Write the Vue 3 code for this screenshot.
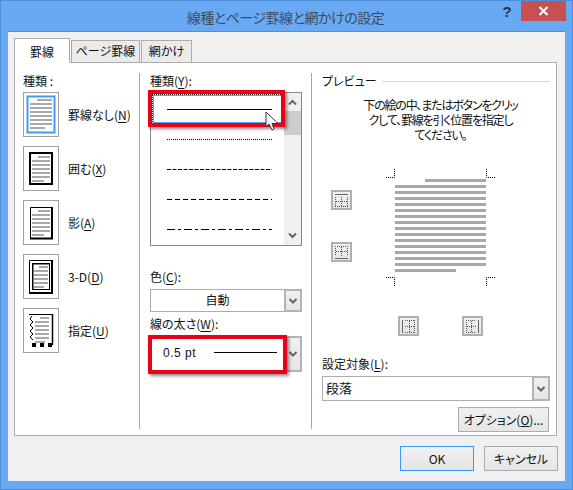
<script setup>
const makeLines = (x, w, indent, lastW, y, n) =>
  Array.from({ length: n }, (_, i) => ({
    x: i === 0 ? x + indent : x,
    y: y + i * 4,
    w: i === 0 ? w - indent : i === n - 1 ? lastW : w
  }))

const borders = [
  { kind: 'none', label: '罫線なし', key: 'N', lines: makeLines(6, 22, 7, 15, 6, 8) },
  { kind: 'box', label: '囲む', key: 'X', lines: makeLines(8, 18, 6, 12, 9, 7) },
  { kind: 'shadow', label: '影', key: 'A', lines: makeLines(8, 18, 6, 12, 9, 7) },
  { kind: 'three', label: '3-D', key: 'D', lines: makeLines(10, 14, 5, 10, 11, 6) },
  { kind: 'custom', label: '指定', key: 'U', lines: makeLines(11, 14, 5, 10, 8, 7) }
]
const previewLines = Array.from({ length: 16 }, (_, i) => i)
const dashes = ['1 1', '4 1.500', '5 3', '8 3 3 3']
</script>

<template>
  <div class="window">
    <header class="titlebar">
      <div class="title">線種とページ罫線と網かけの設定</div>
      <div class="help">?</div>
      <div class="close">
        <svg width="11" height="10" viewBox="0 0 11 10"><path d="M1.500 1l8 8M9.500 1l-8 8" stroke="#fff" stroke-width="2" fill="none" /></svg>
      </div>
    </header>
    <main class="client">
      <nav class="tabs">
        <div class="tab active">罫線</div>
        <div class="tab second">ページ罫線</div>
        <div class="tab third">網かけ</div>
      </nav>
      <section class="panel">
        <div class="col left">
          <div class="label kind-label">種類 :</div>
          <div v-for="b in borders" :key="b.kind" class="option">
            <div class="thumb">
              <svg width="34" height="43" viewBox="0 0 34 43">
                <rect v-for="(l, i) in b.lines" :key="i" :x="l.x" :y="l.y" :width="l.w" height="2" fill="#a8a8a8" />
                <rect v-if="b.kind === 'none'" x="3.500" y="3.500" width="27" height="36" fill="none" stroke="#3f9cf5" stroke-width="2" />
                <rect v-if="b.kind === 'box'" x="6" y="6" width="22" height="31" fill="none" stroke="#000" stroke-width="2" />
                <g v-if="b.kind === 'shadow'">
                  <path d="M6.500 37V6.500H27" fill="none" stroke="#000" />
                  <path d="M6 37.500h22V6" fill="none" stroke="#000" stroke-width="2" />
                </g>
                <g v-if="b.kind === 'three'">
                  <path d="M5.500 37V5.500H28" fill="none" stroke="#000" />
                  <path d="M5 38h23V5" fill="none" stroke="#000" stroke-width="2" />
                  <rect x="8.500" y="8.500" width="17" height="26" fill="none" stroke="#000" />
                  <path d="M8 9h17M9 9v25" stroke="#000" fill="none" />
                </g>
                <g v-if="b.kind === 'custom'">
                  <path d="M5 5.500h23" stroke="#000" fill="none" />
                  <path d="M28.500 5v31" stroke="#000" stroke-width="1.500" fill="none" />
                  <path d="M8 7L6 10l3 3-3 3 3 3-3 3 3 3-3 3 3 3" stroke="#000" fill="none" />
                  <path d="M8 34h4v4H8zM16 34h4v4h-4zM24 34h4v4h-4z" fill="#000" />
                </g>
              </svg>
            </div>
            <div class="label option-label">{{ b.label }}(<u>{{ b.key }}</u>)</div>
          </div>
        </div>

        <div class="col middle">
          <div class="label">種類(<u>Y</u>):</div>
          <div class="listbox">
            <div class="rows">
              <div class="row selected">
                <svg width="105" height="1" class="line"><path d="M0 .5h105" stroke="#000" /></svg>
              </div>
              <div v-for="d in dashes" :key="d" class="row">
                <svg width="105" height="1" class="line"><path d="M0 .5h105" stroke="#000" :stroke-dasharray="d" /></svg>
              </div>
            </div>
            <div class="scrollbar">
              <svg width="17" height="18" viewBox="0 0 17 18"><path d="M5 11.500l3.500-3.500 3.500 3.500" fill="none" stroke="#666" stroke-width="2" /></svg>
              <div class="scroll-thumb"></div>
              <div class="scroll-rest"></div>
              <svg width="17" height="18" viewBox="0 0 17 18"><path d="M5 6.500l3.500 3.500 3.500-3.500" fill="none" stroke="#666" stroke-width="2" /></svg>
            </div>
            <div class="highlight first-highlight"></div>
            <svg class="cursor" width="14" height="21" viewBox="0 0 14 21">
              <path d="M1 1v15l3-3 3 6 2-1-2-5.500h6z" fill="#fff" stroke="#333" />
            </svg>
          </div>
          <div class="label color-label">色(<u>C</u>):</div>
          <div class="combo color-combo">
            <div class="combo-value centered">自動</div>
            <div class="combo-btn"><svg width="10" height="6" viewBox="0 0 10 6"><path d="M1.500 1l3.500 3.500 3.500-3.500" fill="none" stroke="#666" stroke-width="2" /></svg></div>
          </div>
          <div class="label width-label">線の太さ(<u>W</u>):</div>
          <div class="combo width-combo">
            <div class="combo-value width-value">
              <span>0.5 pt</span>
              <span class="width-line"></span>
            </div>
            <div class="combo-btn"><svg width="10" height="6" viewBox="0 0 10 6"><path d="M1.500 1l3.500 3.500 3.500-3.500" fill="none" stroke="#666" stroke-width="2" /></svg></div>
            <div class="highlight second-highlight"></div>
          </div>
        </div>

        <div class="col right">
          <div class="preview-head">
            <span class="label">プレビュー</span>
            <span class="rule"></span>
          </div>
          <p class="hint">下の絵の中、またはボタンをクリッ<br />クして、罫線を引く位置を指定し<br />てください。</p>
          <div class="preview">
            <div class="side-buttons">
              <button class="edge-btn"><svg width="13" height="13" viewBox="0 0 13 13"><path d="M0 .5h13" stroke="#666" /><path d="M.5 3v10M12.500 3v10M0 12.500h13M6.500 3v9M1 7.500h11" stroke="#555" stroke-dasharray="1 1" fill="none" /></svg></button>
              <button class="edge-btn"><svg width="13" height="13" viewBox="0 0 13 13"><path d="M0 12.500h13" stroke="#666" /><path d="M.5 0v10M12.500 0v10M0 .5h13M6.500 1v9M1 5.500h11" stroke="#555" stroke-dasharray="1 1" fill="none" /></svg></button>
            </div>
            <div class="page">
              <div class="corners-row">
                <svg width="9" height="9" viewBox="0 0 9 9"><path d="M0 8.500h8.500V0" fill="none" stroke="#000" stroke-dasharray="1 1" /></svg>
                <svg width="9" height="9" viewBox="0 0 9 9"><path d="M9 8.500H.5V0" fill="none" stroke="#000" stroke-dasharray="1 1" /></svg>
              </div>
              <div class="text-lines">
                <div v-for="i in previewLines" :key="i" class="text-line" :class="{ head: i === 0, tail: i === 15 }"></div>
              </div>
              <div class="corners-row bottom">
                <svg width="9" height="9" viewBox="0 0 9 9"><path d="M0 .5h8.500V9" fill="none" stroke="#000" stroke-dasharray="1 1" /></svg>
                <svg width="9" height="9" viewBox="0 0 9 9"><path d="M9 .5H.5V9" fill="none" stroke="#000" stroke-dasharray="1 1" /></svg>
              </div>
            </div>
          </div>
          <div class="bottom-buttons">
            <button class="edge-btn"><svg width="13" height="13" viewBox="0 0 13 13"><path d="M.5 0v13" stroke="#666" /><path d="M3 .5h10M3 12.500h10M12.500 0v13M3 6.500h9M7.500 1v11" stroke="#555" stroke-dasharray="1 1" fill="none" /></svg></button>
            <button class="edge-btn"><svg width="13" height="13" viewBox="0 0 13 13"><path d="M12.500 0v13" stroke="#666" /><path d="M0 .5h10M0 12.500h10M.5 0v13M1 6.500h9M5.500 1v11" stroke="#555" stroke-dasharray="1 1" fill="none" /></svg></button>
          </div>
          <div class="label target-label">設定対象(<u>L</u>):</div>
          <div class="combo target-combo">
            <div class="combo-value target-value">段落</div>
            <div class="combo-btn"><svg width="10" height="6" viewBox="0 0 10 6"><path d="M1.500 1l3.500 3.500 3.500-3.500" fill="none" stroke="#666" stroke-width="2" /></svg></div>
          </div>
          <div class="option-row">
            <button class="push option-btn">オプション(<u>O</u>)...</button>
          </div>
        </div>
      </section>
      <footer class="footer">
        <button class="push ok">OK</button>
        <button class="push">キャンセル</button>
      </footer>
    </main>
  </div>
</template>

<style>
html, body { margin: 0; padding: 0; background: #6aaaf5; }
</style>

<style scoped>
.window {
  width: 573px;
  height: 490px;
  box-sizing: border-box;
  background: #69a9f4;
  border: 1px solid #4f8fd9;
  display: flex;
  flex-direction: column;
  font: 12px "Noto Sans CJK JP", "Liberation Sans", sans-serif;
  font-feature-settings: "palt";
  color: #111;
  overflow: hidden;
}
.titlebar {
  height: 30px;
  flex: none;
  display: flex;
  align-items: flex-start;
}
.title {
  flex: 1;
  text-align: center;
  margin: 5px 0 0 70px;
  font-size: 14px;
  line-height: 22px;
  letter-spacing: -.5px;
  color: #3c4c5c;
}
.help {
  width: 14px;
  font: bold 15px/21px "Liberation Sans", sans-serif;
  color: #333;
  text-align: center;
  margin-right: 7px;
}
.close {
  width: 45px;
  height: 20px;
  background: #c75050;
  margin-right: 6px;
  display: flex;
  align-items: center;
  justify-content: center;
}
.client {
  flex: 1;
  margin: 0 7px 8px;
  background: #f0f0f0;
  border-top: 1px solid #4f8fd9;
  display: flex;
  flex-direction: column;
  padding: 7px 7px 0 6px;
  min-height: 0;
}
.tabs {
  display: flex;
  align-items: flex-end;
  height: 24px;
  flex: none;
  position: relative;
  z-index: 1;
  margin-bottom: -1px;
}
.tab {
  box-sizing: border-box;
  border: 1px solid #acacac;
  background: #ebebeb;
  height: 23px;
  line-height: 20px;
  text-align: center;
  margin-right: 1px;
}
.tab.active {
  width: 56px;
  height: 25px;
  background: #fff;
  border-bottom-color: #fff;
  line-height: 25px;
}
.tab.second { width: 69px; }
.tab.third { width: 51px; }
.panel {
  flex: none;
  width: 543px;
  height: 374px;
  box-sizing: border-box;
  background: #fff;
  border: 1px solid #acacac;
  display: flex;
  padding-top: 10px;
}
.col { height: 356px; box-sizing: border-box; }
.left { width: 125px; padding: 0 0 0 8px; border-right: 1px solid #a8a8a8; }
.middle { width: 172px; padding-left: 10px; border-right: 1px solid #a8a8a8; }
.right { width: 237px; padding-left: 10px; }
.label { line-height: 16px; height: 16px; white-space: nowrap; }
.label u { text-underline-offset: 2px; }
.kind-label { margin-bottom: 3px; font-feature-settings: normal; }
.option { display: flex; align-items: center; height: 54px; }
.thumb {
  width: 34px;
  height: 43px;
  border: 1px solid #a0a0a0;
  margin-bottom: 9px;
  flex: none;
}
.thumb svg { display: block; }
.option-label { margin: 0 0 9px 9px; }
.listbox {
  position: relative;
  margin-top: 3px;
  width: 152px;
  height: 154px;
  box-sizing: border-box;
  border: 1px solid #828790;
  display: flex;
}
.rows { flex: 1; padding: 1px; }
.row {
  height: 30px;
  display: flex;
  align-items: center;
  padding-left: 15px;
}
.row.selected {
  box-sizing: border-box;
  border: 1px dotted #222;
  outline: 1px solid #56a6ef;
  outline-offset: -2px;
  padding: 1px 0 0 14px;
}
.line { display: block; }
.scrollbar {
  width: 17px;
  background: #f0f0f0;
  display: flex;
  flex-direction: column;
}
.scrollbar svg { display: block; flex: none; }
.scroll-thumb { height: 24px; background: #cdcdcd; flex: none; }
.scroll-rest { flex: 1; }
.highlight {
  position: absolute;
  box-sizing: border-box;
  border: 4px solid #ec0018;
  box-shadow: 2px 2px 3px rgba(0, 0, 0, .45);
  pointer-events: none;
}
.first-highlight { left: -3px; top: -3px; width: 137px; height: 37px; }
.cursor { position: absolute; left: 114px; top: 18px; }
.color-label { margin-top: 23px; }
.combo {
  display: flex;
  box-sizing: border-box;
  width: 152px;
  border: 1px solid #acacac;
  background: #fff;
  position: relative;
  margin-top: 4px;
}
.color-combo { height: 23px; }
.combo-value { flex: 1; line-height: 20px; }
.centered { text-align: center; }
.combo-btn {
  width: 18px;
  flex: none;
  box-sizing: border-box;
  margin: -1px -1px -1px 0;
  border: 2px solid #b4b4b4;
  background: linear-gradient(#f0f0f0, #e5e5e5);
  display: flex;
  align-items: center;
  justify-content: center;
}
.width-label { margin-top: 4px; }
.width-combo { height: 36px; margin-top: 4px; }
.width-value {
  display: flex;
  align-items: center;
  padding: 0 0 3px 12px;
  font-family: "Liberation Sans", sans-serif;
  letter-spacing: .5px;
}
.width-line { width: 63px; height: 1px; background: #000; margin-left: 18px; }
.second-highlight { left: -3px; top: -2px; width: 139px; height: 39px; }
.preview-head { display: flex; align-items: center; height: 16px; gap: 5px; width: 228px; }
.rule { flex: 1; height: 1px; background: #d8d8d8; }
.hint {
  margin: 8px 0 0;
  box-sizing: border-box;
  width: 228px;
  padding-left: 9px;
  text-align: center;
  line-height: 15px;
  letter-spacing: -1.2px;
}
.preview { display: flex; height: 158px; margin-top: 10px; }
.side-buttons {
  display: flex;
  flex-direction: column;
  gap: 32px;
  padding-top: 38px;
  margin-left: 9px;
  width: 55px;
  flex: none;
}
.edge-btn {
  width: 21px;
  height: 20px;
  padding: 0;
  box-sizing: border-box;
  border: 2px solid #b0b0b0;
  background: linear-gradient(#f0f0f0, #e5e5e5);
  display: flex;
  align-items: center;
  justify-content: center;
}
.edge-btn svg { display: block; }
.page { width: 109px; padding-top: 17px; }
.corners-row { display: flex; justify-content: space-between; height: 9px; }
.corners-row svg { display: block; }
.text-lines {
  width: 91px;
  margin: 1px 0 0 9px;
  display: flex;
  flex-direction: column;
  gap: 3px;
  height: 93px;
}
.text-line { height: 3px; background: #a8a8a8; flex: none; }
.text-line.head { width: 61px; margin-left: 30px; }
.text-line.tail { width: 61px; }
.corners-row.bottom { margin-top: 5px; }
.bottom-buttons { display: flex; gap: 43px; margin: 6px 0 0 76px; }
.target-label { margin-top: 20px; }
.target-combo { width: 228px; height: 25px; margin-top: 4px; }
.target-value { padding-left: 3px; line-height: 22px; font-size: 13px; }
.option-row { display: flex; justify-content: flex-end; width: 227px; margin-top: 6px; }
.push {
  font: inherit;
  font-feature-settings: "palt";
  color: #111;
  width: 74px;
  height: 25px;
  padding: 0;
  box-sizing: border-box;
  border: 1px solid #acacac;
  background: linear-gradient(#f0f0f0, #e5e5e5);
}
.option-btn { width: 91px; }
.footer { display: flex; justify-content: flex-end; gap: 10px; margin-top: 10px; }
.ok { border-color: #3399ff; }
</style>
